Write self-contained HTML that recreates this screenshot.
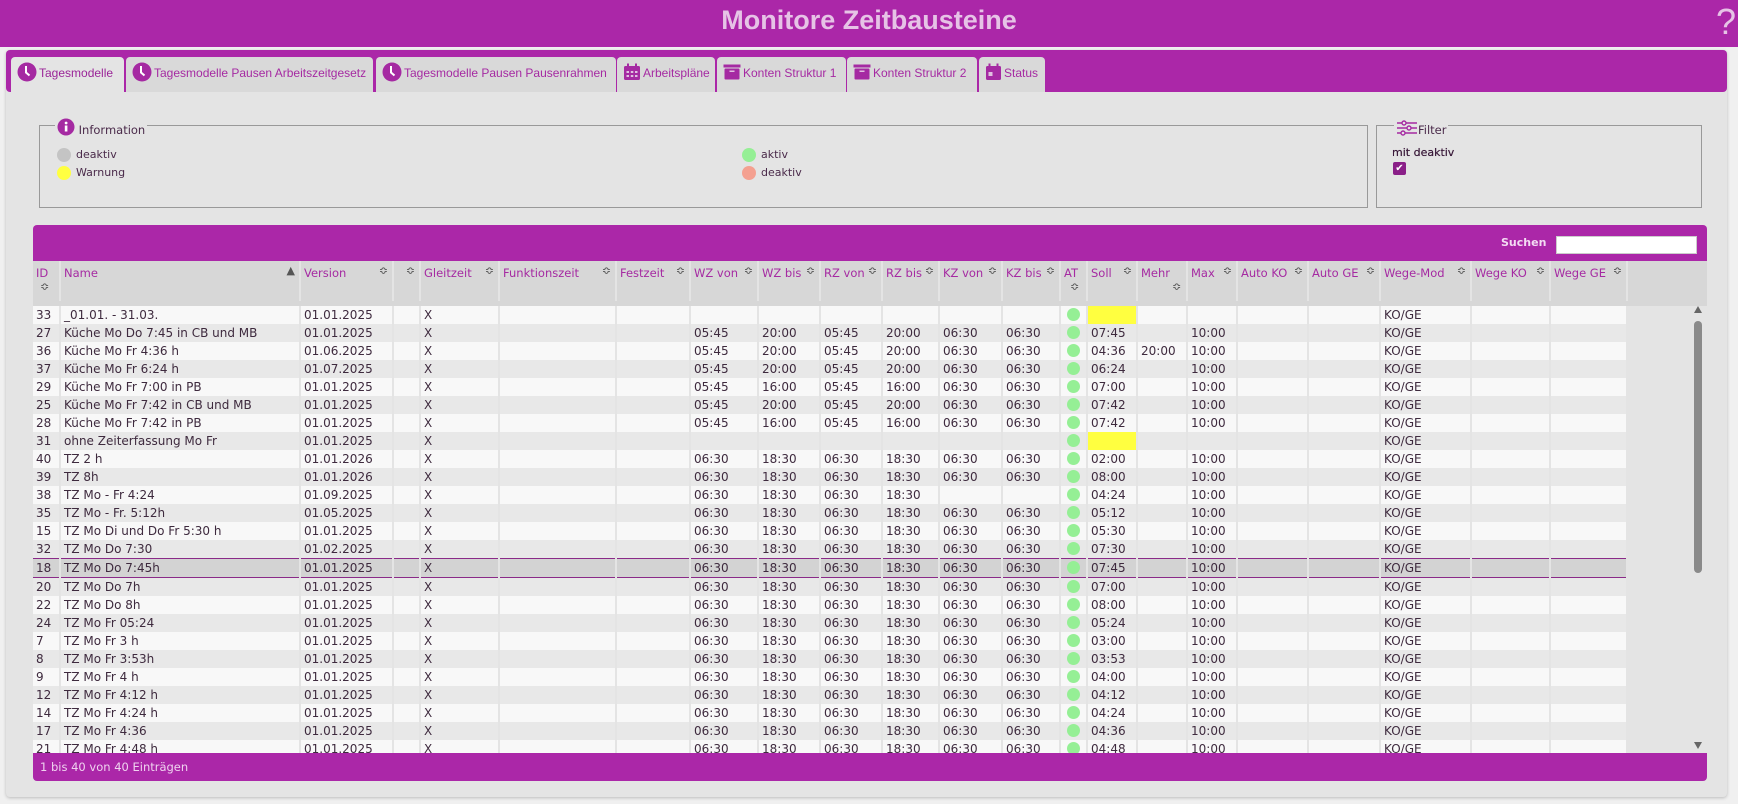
<!DOCTYPE html>
<html><head><meta charset="utf-8">
<style>
*{box-sizing:border-box;margin:0;padding:0}
body{width:1738px;height:804px;background:#f0f0f0;position:relative;overflow:hidden;font-family:"Liberation Sans",sans-serif}
.hdr{position:absolute;left:0;top:0;width:1738px;height:47px;background:#ab27a8}
.hdr h1{position:absolute;left:0;width:1738px;text-align:center;top:5px;font-size:27px;font-weight:bold;color:#e6c3e6}
.hdr .q{position:absolute;right:2px;top:1px;font-size:36px;color:#e6c3e6}
.cont{position:absolute;left:6px;top:50px;width:1721px;height:747px;background:#e4e4e4;border-radius:4px;box-shadow:0 1px 3px #bbb}
.tabbar{position:absolute;left:0;top:0;width:1721px;height:42px;background:#ab27a8;border-radius:4px}
.tab{position:absolute;top:7px;height:35px;background:#d9d9d9;border-radius:4px 4px 0 0;color:#a52aa2;font-size:12px;line-height:33px;padding-left:6px;white-space:nowrap;overflow:hidden}
.tab.act{background:#e4e4e4;height:36px;color:#9a2598}
.tab svg{vertical-align:middle;margin-right:2px;position:relative;top:-2px}
fieldset{position:absolute;border:1px solid #999;}
.lg{position:absolute;background:#e4e4e4;font-family:"DejaVu Sans",sans-serif;font-size:11.5px;color:#4a2a4a;padding:0 2px}
.dot{position:absolute;width:14px;height:14px;border-radius:7px}
.it{position:absolute;font-family:"DejaVu Sans",sans-serif;font-size:11px;color:#4a2a4a}
.wrap{position:absolute;left:33px;top:225px;width:1674px;height:556px}
.top{position:absolute;left:0;top:0;width:1674px;height:36px;background:#ab27a8;border-radius:4px 4px 0 0}
.foot{position:absolute;left:0;top:528px;width:1674px;height:28px;background:#ab27a8;border-radius:0 0 4px 4px;color:#efd3ef;font-family:"DejaVu Sans",sans-serif;font-size:11.5px;line-height:28px;padding-left:7px}
table{border-collapse:collapse;table-layout:fixed;font-family:"DejaVu Sans",sans-serif;font-size:12px;color:#3e2a3e}
td{border-right:2px solid #e4e4e4;height:18px;padding:0 0 0 3px;white-space:nowrap;overflow:hidden}
.ht td{background:#d7d7d7;color:#a52aa2;vertical-align:top;padding-top:5px;height:40px;position:relative;border-right:2px solid #e4e4e4;font-size:11.5px}
.ht td span{position:absolute;right:4px;top:5px;font-size:11px;color:#555;line-height:10px}
.ht td span.b{right:auto;left:10px;top:21px}
.bd tr:nth-child(odd) td{background:#f8f8f8}
.bd tr:nth-child(even) td{background:#e8e8e8}
.bd tr.sel td{background:#d3d3d3;border-top:1px solid #8a2a88;border-bottom:1px solid #8a2a88}
.bd td:nth-child(2),.bd td:nth-child(3){border-left:1px solid #9cc0dc}
.g{display:inline-block;width:13px;height:13px;border-radius:7px;background:#95ef95;margin-top:2px;margin-left:3px}
.y{background:#ffff40!important}
</style></head><body>
<div class="hdr"><h1>Monitore Zeitbausteine</h1><div class="q">?</div></div>
<div class="cont">
<div class="tabbar"></div>
<div class="tab act" style="left:5px;width:113px"><svg width="20" height="20" viewBox="0 0 20 20"><circle cx="10" cy="10" r="9.5" fill="#a52aa2"/><path d="M9 4v6.5l3.5 3" stroke="#fff" stroke-width="2" fill="none"/></svg>Tagesmodelle</div>
<div class="tab" style="left:120px;width:247px"><svg width="20" height="20" viewBox="0 0 20 20"><circle cx="10" cy="10" r="9.5" fill="#a52aa2"/><path d="M9 4v6.5l3.5 3" stroke="#fff" stroke-width="2" fill="none"/></svg>Tagesmodelle Pausen Arbeitszeitgesetz</div>
<div class="tab" style="left:370px;width:240px"><svg width="20" height="20" viewBox="0 0 20 20"><circle cx="10" cy="10" r="9.5" fill="#a52aa2"/><path d="M9 4v6.5l3.5 3" stroke="#fff" stroke-width="2" fill="none"/></svg>Tagesmodelle Pausen Pausenrahmen</div>
<div class="tab" style="left:611px;width:98px"><svg width="18" height="18" viewBox="0 0 18 18"><rect x="1" y="3" width="16" height="14" rx="1.5" fill="#a52aa2"/><rect x="4" y="0.5" width="2" height="4" fill="#a52aa2"/><rect x="12" y="0.5" width="2" height="4" fill="#a52aa2"/><g fill="#e0c0e0"><rect x="3.5" y="8" width="2.5" height="2"/><rect x="7.8" y="8" width="2.5" height="2"/><rect x="12" y="8" width="2.5" height="2"/><rect x="3.5" y="12" width="2.5" height="2"/><rect x="7.8" y="12" width="2.5" height="2"/><rect x="12" y="12" width="2.5" height="2"/></g></svg>Arbeitspläne</div>
<div class="tab" style="left:711px;width:129px"><svg width="18" height="18" viewBox="0 0 18 18"><rect x="0.5" y="1.5" width="17" height="3" fill="#a52aa2"/><rect x="1.5" y="5.5" width="15" height="11" rx="1" fill="#a52aa2"/><rect x="6.5" y="7.5" width="5" height="1.5" fill="#e0c0e0"/></svg>Konten Struktur 1</div>
<div class="tab" style="left:841px;width:130px"><svg width="18" height="18" viewBox="0 0 18 18"><rect x="0.5" y="1.5" width="17" height="3" fill="#a52aa2"/><rect x="1.5" y="5.5" width="15" height="11" rx="1" fill="#a52aa2"/><rect x="6.5" y="7.5" width="5" height="1.5" fill="#e0c0e0"/></svg>Konten Struktur 2</div>
<div class="tab" style="left:973px;width:66px"><svg width="17" height="18" viewBox="0 0 17 18"><rect x="1" y="3" width="15" height="14" rx="1.5" fill="#a52aa2"/><rect x="3.5" y="0.5" width="2" height="4" fill="#a52aa2"/><rect x="11.5" y="0.5" width="2" height="4" fill="#a52aa2"/><rect x="3.5" y="9" width="4" height="4" fill="#e0c0e0"/></svg>Status</div>

<fieldset style="left:33px;top:75px;width:1329px;height:83px"></fieldset>
<div class="lg" style="left:49px;top:67px;height:20px;line-height:26px"><svg width="18" height="18" viewBox="0 0 18 18" style="vertical-align:-2px"><circle cx="9" cy="9" r="8.5" fill="#a52aa2"/><rect x="7.8" y="7.5" width="2.6" height="6" fill="#fff"/><circle cx="9.1" cy="5" r="1.4" fill="#fff"/></svg> Information</div>
<div class="dot" style="left:51px;top:98px;background:#c4c4c4"></div><div class="it" style="left:70px;top:98px">deaktiv</div>
<div class="dot" style="left:51px;top:116px;background:#ffff40"></div><div class="it" style="left:70px;top:116px">Warnung</div>
<div class="dot" style="left:736px;top:98px;background:#95ef95"></div><div class="it" style="left:755px;top:98px">aktiv</div>
<div class="dot" style="left:736px;top:116px;background:#f4a090"></div><div class="it" style="left:755px;top:116px">deaktiv</div>

<fieldset style="left:1370px;top:75px;width:326px;height:83px"></fieldset>
<div class="lg" style="left:1388px;top:67px;height:20px;line-height:26px"><svg width="22" height="16" viewBox="0 0 22 16" style="vertical-align:-2px"><g stroke="#a52aa2" stroke-width="1.6" fill="none"><path d="M1 3h20M1 8h20M1 13h20"/></g><g fill="#e4e4e4" stroke="#a52aa2" stroke-width="1.4"><circle cx="8" cy="3" r="2"/><circle cx="13" cy="8" r="2"/><circle cx="7" cy="13" r="2"/></g></svg>Filter</div>
<div class="it" style="left:1386px;top:96px;color:#3a1a3a;text-shadow:0 0 0.4px #3a1a3a">mit deaktiv</div>
<div style="position:absolute;left:1387px;top:112px;width:13px;height:13px;background:#8a1f88;border-radius:2px;color:#fff;font-size:10px;line-height:13px;text-align:center">✔</div>
</div>

<div class="wrap">
<div class="top"><span style="position:absolute;left:1468px;top:11px;color:#f3dbf3;font-family:'DejaVu Sans',sans-serif;font-size:11px;font-weight:bold">Suchen</span><div style="position:absolute;left:1523px;top:11px;width:141px;height:18px;background:#fff;border:1px solid #ccc"></div></div>
<div style="position:absolute;left:0;top:36px;width:1674px;height:45px;background:#d7d7d7"></div>
<table class="ht" style="position:absolute;left:0;top:36px;width:1595px">
<colgroup><col style="width:27px"><col style="width:240px"><col style="width:93px"><col style="width:27px"><col style="width:79px"><col style="width:117px"><col style="width:74px"><col style="width:68px"><col style="width:62px"><col style="width:62px"><col style="width:57px"><col style="width:63px"><col style="width:58px"><col style="width:27px"><col style="width:50px"><col style="width:50px"><col style="width:50px"><col style="width:71px"><col style="width:72px"><col style="width:91px"><col style="width:79px"><col style="width:77px"></colgroup>
<tr><td>ID<span class="b" style="left:7px">≎</span></td><td>Name<span>▲</span></td><td>Version<span>≎</span></td><td><span>≎</span></td><td>Gleitzeit<span>≎</span></td><td>Funktionszeit<span>≎</span></td><td>Festzeit<span>≎</span></td><td>WZ von<span>≎</span></td><td>WZ bis<span>≎</span></td><td>RZ von<span>≎</span></td><td>RZ bis<span>≎</span></td><td>KZ von<span>≎</span></td><td>KZ bis<span>≎</span></td><td>AT<span class="b" style="left:9px">≎</span></td><td>Soll<span>≎</span></td><td>Mehr<span class="b" style="left:34px">≎</span></td><td>Max<span>≎</span></td><td>Auto KO<span>≎</span></td><td>Auto GE<span>≎</span></td><td>Wege-Mod<span>≎</span></td><td>Wege KO<span>≎</span></td><td>Wege GE<span>≎</span></td></tr>
</table>
<div style="position:absolute;left:0;top:76px;width:1674px;height:452px;overflow:hidden">
<table class="bd" style="position:absolute;left:0;top:5px;width:1595px">
<colgroup><col style="width:27px"><col style="width:240px"><col style="width:93px"><col style="width:27px"><col style="width:79px"><col style="width:117px"><col style="width:74px"><col style="width:68px"><col style="width:62px"><col style="width:62px"><col style="width:57px"><col style="width:63px"><col style="width:58px"><col style="width:27px"><col style="width:50px"><col style="width:50px"><col style="width:50px"><col style="width:71px"><col style="width:72px"><col style="width:91px"><col style="width:79px"><col style="width:77px"></colgroup>
<tr><td>33</td><td>_01.01. - 31.03.</td><td>01.01.2025</td><td></td><td>X</td><td></td><td></td><td></td><td></td><td></td><td></td><td></td><td></td><td><span class="g"></span></td><td class="y"></td><td></td><td></td><td></td><td></td><td>KO/GE</td><td></td><td></td></tr>
<tr><td>27</td><td>Küche Mo Do 7:45 in CB und MB</td><td>01.01.2025</td><td></td><td>X</td><td></td><td></td><td>05:45</td><td>20:00</td><td>05:45</td><td>20:00</td><td>06:30</td><td>06:30</td><td><span class="g"></span></td><td>07:45</td><td></td><td>10:00</td><td></td><td></td><td>KO/GE</td><td></td><td></td></tr>
<tr><td>36</td><td>Küche Mo Fr 4:36 h</td><td>01.06.2025</td><td></td><td>X</td><td></td><td></td><td>05:45</td><td>20:00</td><td>05:45</td><td>20:00</td><td>06:30</td><td>06:30</td><td><span class="g"></span></td><td>04:36</td><td>20:00</td><td>10:00</td><td></td><td></td><td>KO/GE</td><td></td><td></td></tr>
<tr><td>37</td><td>Küche Mo Fr 6:24 h</td><td>01.07.2025</td><td></td><td>X</td><td></td><td></td><td>05:45</td><td>20:00</td><td>05:45</td><td>20:00</td><td>06:30</td><td>06:30</td><td><span class="g"></span></td><td>06:24</td><td></td><td>10:00</td><td></td><td></td><td>KO/GE</td><td></td><td></td></tr>
<tr><td>29</td><td>Küche Mo Fr 7:00 in PB</td><td>01.01.2025</td><td></td><td>X</td><td></td><td></td><td>05:45</td><td>16:00</td><td>05:45</td><td>16:00</td><td>06:30</td><td>06:30</td><td><span class="g"></span></td><td>07:00</td><td></td><td>10:00</td><td></td><td></td><td>KO/GE</td><td></td><td></td></tr>
<tr><td>25</td><td>Küche Mo Fr 7:42 in CB und MB</td><td>01.01.2025</td><td></td><td>X</td><td></td><td></td><td>05:45</td><td>20:00</td><td>05:45</td><td>20:00</td><td>06:30</td><td>06:30</td><td><span class="g"></span></td><td>07:42</td><td></td><td>10:00</td><td></td><td></td><td>KO/GE</td><td></td><td></td></tr>
<tr><td>28</td><td>Küche Mo Fr 7:42 in PB</td><td>01.01.2025</td><td></td><td>X</td><td></td><td></td><td>05:45</td><td>16:00</td><td>05:45</td><td>16:00</td><td>06:30</td><td>06:30</td><td><span class="g"></span></td><td>07:42</td><td></td><td>10:00</td><td></td><td></td><td>KO/GE</td><td></td><td></td></tr>
<tr><td>31</td><td>ohne Zeiterfassung Mo Fr</td><td>01.01.2025</td><td></td><td>X</td><td></td><td></td><td></td><td></td><td></td><td></td><td></td><td></td><td><span class="g"></span></td><td class="y"></td><td></td><td></td><td></td><td></td><td>KO/GE</td><td></td><td></td></tr>
<tr><td>40</td><td>TZ 2 h</td><td>01.01.2026</td><td></td><td>X</td><td></td><td></td><td>06:30</td><td>18:30</td><td>06:30</td><td>18:30</td><td>06:30</td><td>06:30</td><td><span class="g"></span></td><td>02:00</td><td></td><td>10:00</td><td></td><td></td><td>KO/GE</td><td></td><td></td></tr>
<tr><td>39</td><td>TZ 8h</td><td>01.01.2026</td><td></td><td>X</td><td></td><td></td><td>06:30</td><td>18:30</td><td>06:30</td><td>18:30</td><td>06:30</td><td>06:30</td><td><span class="g"></span></td><td>08:00</td><td></td><td>10:00</td><td></td><td></td><td>KO/GE</td><td></td><td></td></tr>
<tr><td>38</td><td>TZ Mo - Fr 4:24</td><td>01.09.2025</td><td></td><td>X</td><td></td><td></td><td>06:30</td><td>18:30</td><td>06:30</td><td>18:30</td><td></td><td></td><td><span class="g"></span></td><td>04:24</td><td></td><td>10:00</td><td></td><td></td><td>KO/GE</td><td></td><td></td></tr>
<tr><td>35</td><td>TZ Mo - Fr. 5:12h</td><td>01.05.2025</td><td></td><td>X</td><td></td><td></td><td>06:30</td><td>18:30</td><td>06:30</td><td>18:30</td><td>06:30</td><td>06:30</td><td><span class="g"></span></td><td>05:12</td><td></td><td>10:00</td><td></td><td></td><td>KO/GE</td><td></td><td></td></tr>
<tr><td>15</td><td>TZ Mo Di und Do Fr 5:30 h</td><td>01.01.2025</td><td></td><td>X</td><td></td><td></td><td>06:30</td><td>18:30</td><td>06:30</td><td>18:30</td><td>06:30</td><td>06:30</td><td><span class="g"></span></td><td>05:30</td><td></td><td>10:00</td><td></td><td></td><td>KO/GE</td><td></td><td></td></tr>
<tr><td>32</td><td>TZ Mo Do 7:30</td><td>01.02.2025</td><td></td><td>X</td><td></td><td></td><td>06:30</td><td>18:30</td><td>06:30</td><td>18:30</td><td>06:30</td><td>06:30</td><td><span class="g"></span></td><td>07:30</td><td></td><td>10:00</td><td></td><td></td><td>KO/GE</td><td></td><td></td></tr>
<tr class="sel"><td>18</td><td>TZ Mo Do 7:45h</td><td>01.01.2025</td><td></td><td>X</td><td></td><td></td><td>06:30</td><td>18:30</td><td>06:30</td><td>18:30</td><td>06:30</td><td>06:30</td><td><span class="g"></span></td><td>07:45</td><td></td><td>10:00</td><td></td><td></td><td>KO/GE</td><td></td><td></td></tr>
<tr><td>20</td><td>TZ Mo Do 7h</td><td>01.01.2025</td><td></td><td>X</td><td></td><td></td><td>06:30</td><td>18:30</td><td>06:30</td><td>18:30</td><td>06:30</td><td>06:30</td><td><span class="g"></span></td><td>07:00</td><td></td><td>10:00</td><td></td><td></td><td>KO/GE</td><td></td><td></td></tr>
<tr><td>22</td><td>TZ Mo Do 8h</td><td>01.01.2025</td><td></td><td>X</td><td></td><td></td><td>06:30</td><td>18:30</td><td>06:30</td><td>18:30</td><td>06:30</td><td>06:30</td><td><span class="g"></span></td><td>08:00</td><td></td><td>10:00</td><td></td><td></td><td>KO/GE</td><td></td><td></td></tr>
<tr><td>24</td><td>TZ Mo Fr 05:24</td><td>01.01.2025</td><td></td><td>X</td><td></td><td></td><td>06:30</td><td>18:30</td><td>06:30</td><td>18:30</td><td>06:30</td><td>06:30</td><td><span class="g"></span></td><td>05:24</td><td></td><td>10:00</td><td></td><td></td><td>KO/GE</td><td></td><td></td></tr>
<tr><td>7</td><td>TZ Mo Fr 3 h</td><td>01.01.2025</td><td></td><td>X</td><td></td><td></td><td>06:30</td><td>18:30</td><td>06:30</td><td>18:30</td><td>06:30</td><td>06:30</td><td><span class="g"></span></td><td>03:00</td><td></td><td>10:00</td><td></td><td></td><td>KO/GE</td><td></td><td></td></tr>
<tr><td>8</td><td>TZ Mo Fr 3:53h</td><td>01.01.2025</td><td></td><td>X</td><td></td><td></td><td>06:30</td><td>18:30</td><td>06:30</td><td>18:30</td><td>06:30</td><td>06:30</td><td><span class="g"></span></td><td>03:53</td><td></td><td>10:00</td><td></td><td></td><td>KO/GE</td><td></td><td></td></tr>
<tr><td>9</td><td>TZ Mo Fr 4 h</td><td>01.01.2025</td><td></td><td>X</td><td></td><td></td><td>06:30</td><td>18:30</td><td>06:30</td><td>18:30</td><td>06:30</td><td>06:30</td><td><span class="g"></span></td><td>04:00</td><td></td><td>10:00</td><td></td><td></td><td>KO/GE</td><td></td><td></td></tr>
<tr><td>12</td><td>TZ Mo Fr 4:12 h</td><td>01.01.2025</td><td></td><td>X</td><td></td><td></td><td>06:30</td><td>18:30</td><td>06:30</td><td>18:30</td><td>06:30</td><td>06:30</td><td><span class="g"></span></td><td>04:12</td><td></td><td>10:00</td><td></td><td></td><td>KO/GE</td><td></td><td></td></tr>
<tr><td>14</td><td>TZ Mo Fr 4:24 h</td><td>01.01.2025</td><td></td><td>X</td><td></td><td></td><td>06:30</td><td>18:30</td><td>06:30</td><td>18:30</td><td>06:30</td><td>06:30</td><td><span class="g"></span></td><td>04:24</td><td></td><td>10:00</td><td></td><td></td><td>KO/GE</td><td></td><td></td></tr>
<tr><td>17</td><td>TZ Mo Fr 4:36</td><td>01.01.2025</td><td></td><td>X</td><td></td><td></td><td>06:30</td><td>18:30</td><td>06:30</td><td>18:30</td><td>06:30</td><td>06:30</td><td><span class="g"></span></td><td>04:36</td><td></td><td>10:00</td><td></td><td></td><td>KO/GE</td><td></td><td></td></tr>
<tr><td>21</td><td>TZ Mo Fr 4:48 h</td><td>01.01.2025</td><td></td><td>X</td><td></td><td></td><td>06:30</td><td>18:30</td><td>06:30</td><td>18:30</td><td>06:30</td><td>06:30</td><td><span class="g"></span></td><td>04:48</td><td></td><td>10:00</td><td></td><td></td><td>KO/GE</td><td></td><td></td></tr>
</table>
<div style="position:absolute;left:1661px;top:5px;width:0;height:0;border-left:4px solid transparent;border-right:4px solid transparent;border-bottom:7px solid #666"></div>
<div style="position:absolute;left:1661px;top:20px;width:8px;height:252px;background:#8a8a8a;border-radius:4px"></div>
<div style="position:absolute;left:1661px;top:441px;width:0;height:0;border-left:4px solid transparent;border-right:4px solid transparent;border-top:7px solid #666"></div>
</div>
<div class="foot">1 bis 40 von 40 Einträgen</div>
</div>
</body></html>
